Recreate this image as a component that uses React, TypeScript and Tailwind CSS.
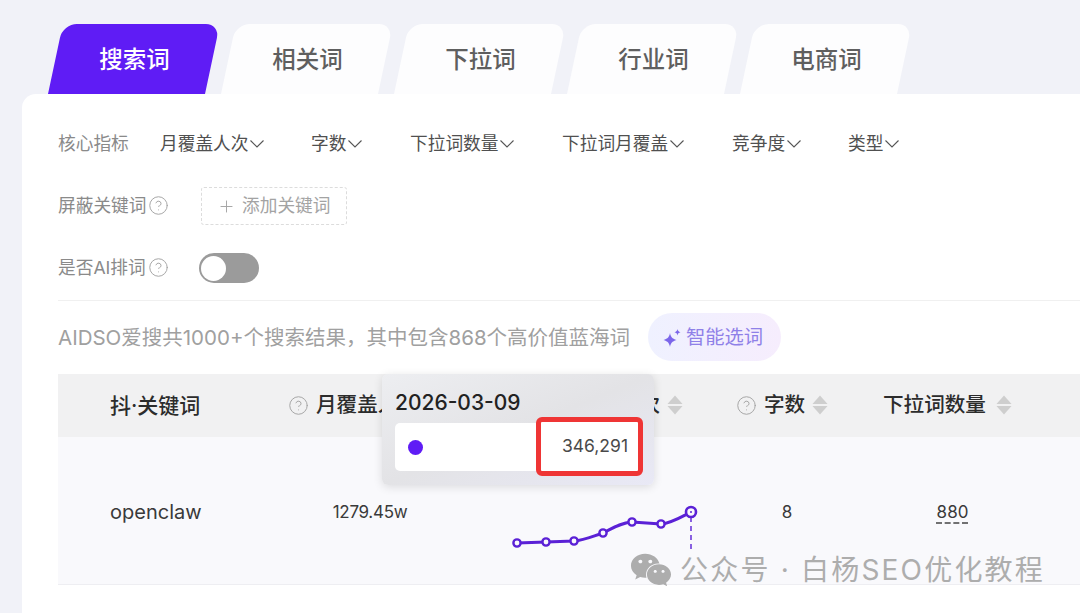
import { CircleHelp, Plus } from 'lucide-react';
import { FaWeixin } from 'react-icons/fa';

const tabs = ['搜索词', '相关词', '下拉词', '行业词', '电商词'];

const filters = [
  { label: '月覆盖人次', width: 'w-[151px]' },
  { label: '字数', width: 'w-[99px]' },
  { label: '下拉词数量', width: 'w-[152px]' },
  { label: '下拉词月覆盖', width: 'w-[170px]' },
  { label: '竞争度', width: 'w-[116px]' },
  { label: '类型', width: 'w-[80px]' },
];

const points = [
  [7, 46],
  [36, 45],
  [64, 44],
  [93, 36],
  [122, 25],
  [151, 27],
];

function Chevron() {
  return (
    <svg className="ml-[2px] w-[14px] h-[8px] shrink-0" viewBox="0 0 14 8" fill="none" stroke="#555" strokeWidth={1.1}>
      <path d="M0.5 0.5L7 7L13.5 0.5" />
    </svg>
  );
}

function SortIcon() {
  return (
    <svg className="w-[16px] h-[20px] shrink-0" viewBox="0 0 16 20" fill="#cecece">
      <path d="M8 0.5L15.5 9H0.5Z" />
      <path d="M0.5 11H15.5L8 19.5Z" />
    </svg>
  );
}

function Help() {
  return <CircleHelp className="w-[21px] h-[21px] text-[#a3a3a3] shrink-0" strokeWidth={1.1} />;
}

export default function App() {
  return (
    <div className="relative flex flex-col w-[1080px] h-[613px] overflow-hidden bg-[#f1f2f8] pt-[24px] font-['Inter','Noto_Sans_CJK_SC',sans-serif]">
      {/* Tabs */}
      <div className="flex gap-[16px] pl-[48px] shrink-0">
        {tabs.map((tab, i) => (
          <div
            key={tab}
            className={`flex items-center justify-center pl-[2px] pt-[1px] w-[157px] h-[70px] rounded-t-[14px] origin-bottom -skew-x-12 ${
              i === 0 ? 'bg-[#5f1cf5]' : 'bg-[#fdfdfe]'
            }`}
          >
            <span
              className={`skew-x-12 text-[23.5px] font-medium ${i === 0 ? 'text-white' : 'text-[#5f5f5f]'}`}
            >
              {tab}
            </span>
          </div>
        ))}
      </div>

      {/* Card */}
      <div className="flex-1 ml-[22px] pt-[29px] pl-[36px] bg-white rounded-tl-[14px]">
        {/* Core metrics */}
        <div className="flex items-center h-[40px] pt-[2px] text-[17.7px]">
          <span className="w-[102px] text-[#8a8a8a]">核心指标</span>
          {filters.map((f) => (
            <div key={f.label} className={`flex items-center text-[#505050] ${f.width}`}>
              {f.label}
              <Chevron />
            </div>
          ))}
        </div>

        {/* Blocked keywords */}
        <div className="flex items-center mt-[24px] h-[38px]">
          <div className="flex items-center gap-[2px] w-[143px] text-[17.7px] text-[#8a8a8a]">
            屏蔽关键词
            <Help />
          </div>
          <div className="flex items-center gap-[6px] w-[146px] h-[38px] pl-[15px] border border-dashed border-[#dcdcdc] rounded-[3px] text-[17.7px] text-[#a3a3a3]">
            <Plus className="w-[19px] h-[19px]" strokeWidth={1.2} />
            添加关键词
          </div>
        </div>

        {/* AI toggle */}
        <div className="flex items-center mt-[28px] h-[30px]">
          <div className="flex items-center gap-[2px] w-[141px] text-[17.7px] text-[#8a8a8a]">
            是否AI排词
            <Help />
          </div>
          <div className="flex items-center w-[60px] h-[30px] pl-[2px] rounded-full bg-[#9b9b9b]">
            <div className="w-[25px] h-[25px] rounded-full bg-white" />
          </div>
        </div>

        <div className="mt-[17px] border-t border-[#f0f0f0]" />

        {/* Summary */}
        <div className="flex items-center mt-[12px] h-[48px]">
          <span className="w-[590px] pt-[2px] text-[20.5px] text-[#a0a0a0] whitespace-nowrap">
            AIDSO爱搜共1000+个搜索结果{'\uFF0C'}其中包含868个高价值蓝海词
          </span>
          <div className="flex items-center gap-[4px] w-[133px] h-[48px] pl-[14px] pt-[1px] rounded-full bg-linear-to-r from-[#eff1ff] to-[#f6edfd] text-[19.3px] text-[#8f80e8]">
            <svg className="w-[20px] h-[20px] shrink-0" viewBox="0 0 20 20" fill="#7c66ea">
              <path d="M8 5C8.8 9 10 10.5 14.5 12C10 13.5 8.8 15 8 19C7.2 15 6 13.5 1.5 12C6 10.5 7.2 9 8 5Z" />
              <path d="M15.5 1C15.9 3 16.5 3.6 18.5 4.2C16.5 4.8 15.9 5.4 15.5 7.4C15.1 5.4 14.5 4.8 12.5 4.2C14.5 3.6 15.1 3 15.5 1Z" />
            </svg>
            智能选词
          </div>
        </div>

        {/* Table */}
        <div className="mt-[13px]">
          <div className="grid grid-cols-[232px_160px_288px_145px_1fr] items-center h-[63px] bg-[#f1f1f2] text-[20.6px] font-medium text-[#2c2c2c]">
            <div className="pl-[52px] text-[21px]">抖·关键词</div>
            <div className="flex items-center gap-[7px] -ml-[2px] whitespace-nowrap">
              <Help />
              月覆盖人次
            </div>
            <div className="flex items-center justify-end gap-[7px] pr-[55px]">
              搜索人次
              <SortIcon />
            </div>
            <div className="flex items-center gap-[7px] -ml-[2px]">
              <Help />
              字数
              <SortIcon />
            </div>
            <div className="flex items-center gap-[10px]">
              下拉词数量
              <SortIcon />
            </div>
          </div>

          <div className="grid grid-cols-[232px_160px_288px_145px_1fr] items-center h-[148px] pt-[2px] bg-[#f9f9fc] border-b border-[#eeeef2] text-[17px] text-[#3a3a3a]">
            <div className="pl-[52px] text-[20px]">openclaw</div>
            <div className="pt-[3px] text-center tracking-[-0.3px]">1279.45w</div>
            <div className="self-start mt-[58px] pl-[60px]">
              {/* Trend line */}
              <svg className="w-[190px] h-[60px]" viewBox="0 0 190 60" fill="none">
                <path
                  d="M7 46L36 45L64 44C75 43 83 39 93 36C103 31 110 26 122 25L151 27C162 26 171 20 181 15"
                  stroke="#5b21d6"
                  strokeWidth={3}
                />
                <path d="M181 20V56" stroke="#5b21d6" strokeWidth={1.4} strokeDasharray="5 4" />
                {points.map(([x, y]) => (
                  <circle key={x} cx={x} cy={y} r={3.6} fill="#f9f9fc" stroke="#5b21d6" strokeWidth={2.4} />
                ))}
                <circle cx={181} cy={15} r={5} fill="#f9f9fc" stroke="#5b21d6" strokeWidth={2.6} />
                <circle cx={181} cy={15} r={1} fill="#5b21d6" />
              </svg>
            </div>
            <div className="pt-[3px] w-[98px] text-center">8</div>
            <div className="pt-[3px] w-[139px] text-center">
              <span className="underline decoration-dashed decoration-[#444] underline-offset-4">880</span>
            </div>
          </div>
        </div>
      </div>

      {/* Tooltip */}
      <div className="absolute left-[382px] top-[374px] w-[272px] h-[111px] pt-[14px] pl-[13px] rounded-[6px] bg-linear-to-br from-[#edeef1] via-[#e3e3e6] to-[#e9e9f6] shadow-[0_2px_10px_rgba(0,0,0,0.12)]">
        <div className="text-[21px] leading-[29px] font-medium text-[#222]">2026-03-09</div>
        <div className="flex items-center mt-[6px] w-[245px] h-[48px] pl-[13px] rounded-[5px] bg-white">
          <div className="w-[15px] h-[15px] rounded-full bg-[#5f1cf5]" />
        </div>
      </div>

      {/* Red highlight */}
      <div className="absolute left-[536px] top-[417px] flex items-center justify-end w-[107px] h-[59px] pr-[10px] border-[5px] border-[#ef3535] rounded-[6px] bg-white text-[17.5px] text-[#4a4a4a]">
        346,291
      </div>

      {/* Watermark */}
      <div className="absolute left-[630px] top-[549px] flex items-center gap-[8px] text-[28px] tracking-[2.2px] text-[#adadad] whitespace-nowrap">
        <FaWeixin className="w-[42px] h-[38px]" />
        公众号 · 白杨SEO优化教程
      </div>
    </div>
  );
}
